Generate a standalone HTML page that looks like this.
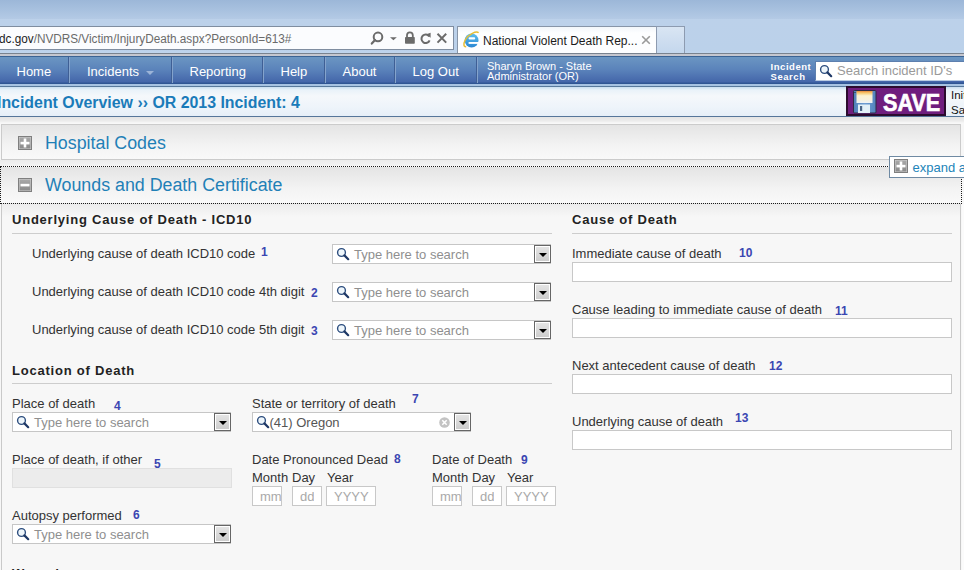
<!DOCTYPE html>
<html><head><meta charset="utf-8"><style>
*{box-sizing:border-box;margin:0;padding:0}
html,body{width:964px;height:570px;overflow:hidden;background:#f7f7f7;font-family:"Liberation Sans",sans-serif;position:relative}
.a{position:absolute}
.nw{white-space:nowrap}
#chrome{left:0;top:0;width:964px;height:56px;background:linear-gradient(#9cb7d8 0px,#a8c1df 10px,#b4cae5 19px,#bcd1ea 19px,#bbd1ea 50px,#c0d5ed 53px)}
#addr{left:-4px;top:26px;width:458px;height:24px;background:#fbfcfe;border:1px solid #7f8da0}
#url{left:-1px;top:32px;font-size:12px;color:#6a6a6a;transform:scaleX(0.98);transform-origin:0 0}
#url b{font-weight:normal;color:#1a1a1a}
#tab{left:457px;top:26px;width:200px;height:28px;background:linear-gradient(#f2f6fa,#fdfeff 6px,#fdfeff);border:1px solid #8795a8;border-bottom:none}
#newtab{left:656px;top:26px;width:29px;height:27px;background:linear-gradient(#d9e5f3,#c4d7ed);border:1px solid #8d9bb0;border-bottom:none}
#tabtitle{left:483px;top:34px;font-size:12px;color:#1b1b1b;transform-origin:0 0}
#sep1{left:0;top:53px;width:964px;height:1px;background:#79838f}
#sep2{left:0;top:54px;width:964px;height:2px;background:#c5c7cf}
#nav{left:0;top:56px;width:964px;height:28px;background:linear-gradient(#3b6394 0px,#3b6394 1px,#6b96c1 1px,#6690c0 5px,#5a82ba 14px,#4466aa 26px,#2f5594 27px,#2f5594 28px)}
#navb1{left:0;top:84px;width:964px;height:2px;background:#a6c2e2}
#navb2{left:0;top:86px;width:964px;height:1px;background:#58799c}
.ns{top:57px;width:2px;height:26px;border-left:1px solid #3f5f95;border-right:1px solid #84a3cc}
.ni{top:64px;font-size:13px;color:#fff}
#bar2{left:0;top:87px;width:964px;height:30px;background:linear-gradient(#c9def1,#e9f2f9 3px,#f5f8fb 9px,#eef4fa 20px,#e6eff8 29px)}
#bar2b{left:0;top:116px;width:964px;height:1px;background:#56769a}
#crumb{left:-3.5px;top:94px;font-size:16px;font-weight:bold;color:#1a7bb9;transform:scaleX(0.993);transform-origin:0 0}
#save{left:846px;top:86px;width:100px;height:30px;background:#6f1d7d;border:2px solid #2b0b2e;border-top-width:2px}
#savet{left:883px;top:89px;font-size:24px;font-weight:bold;color:#fff;-webkit-text-stroke:0.7px #fff;transform:scaleX(0.9);transform-origin:0 0}
#initsa{left:951px;top:88px;font-size:11.5px;line-height:15px;color:#111}
.panel{left:1px;width:960px;background:linear-gradient(#e4e4e4,#f3f3f3 60%,#f9f9f9);border:1px solid #cbcbcb}
.ptitle{font-size:18px;color:#1f80b7;transform:scaleX(0.99);transform-origin:0 0}
.lab{font-size:13px;color:#333}
.hd{font-size:13px;font-weight:bold;color:#222;letter-spacing:0.78px}
.rule{height:1px;background:#cdcdcd}
.num{font-size:12px;font-weight:bold;color:#3b46b2}
.sb{height:20px;background:#fff;border:1px solid #c6c6c6}
.ph{font-size:13px;color:#8f8f8f}
.dd{width:17px;height:18px;border:1px solid #666;box-shadow:inset 0 0 0 1px #fff;background:linear-gradient(#e6e6e6,#cccccc)}
.tri{width:0;height:0;border-left:4px solid transparent;border-right:4px solid transparent;border-top:4px solid #000}
.tb{height:20px;background:#fff;border:1px solid #c8c8c8}
.tph{font-size:13px;color:#a9a9a9;overflow:hidden}
</style></head><body>
<div id="chrome" class="a"></div>
<div id="addr" class="a"></div>
<div id="url" class="a nw"><b>dc.gov</b>/NVDRS/Victim/InjuryDeath.aspx?PersonId=613#</div>
<svg class="a" style="left:370px;top:31px" width="80" height="15" viewBox="0 0 80 15"><circle cx="8" cy="5.9" r="4.3" fill="none" stroke="#6b6b6b" stroke-width="2"/><path d="M5 9 L1.8 12.6" stroke="#6b6b6b" stroke-width="2.2" stroke-linecap="round"/><path d="M20 6.2 L26.8 6.2 L23.4 9.2 Z" fill="#6b6b6b"/><rect x="35" y="5.9" width="9.8" height="6.8" rx="0.8" fill="#6b6b6b"/><path d="M37 6.2 V4.2 A2.9 2.9 0 0 1 42.8 4.2 V6.2" fill="none" stroke="#6b6b6b" stroke-width="1.8"/><path d="M59.2 5.5 A4.2 4.2 0 1 0 59.6 9.3" fill="none" stroke="#6b6b6b" stroke-width="2"/><path d="M56.2 3.2 L60.6 1.8 L60.6 6.8 Z" fill="#6b6b6b"/><path d="M67.5 2.8 L76.2 11.6 M76.2 2.8 L67.5 11.6" stroke="#6b6b6b" stroke-width="2"/></svg>
<div id="tab" class="a"></div>
<div id="newtab" class="a"></div>
<svg class="a" style="left:461px;top:30px" width="20" height="20" viewBox="0 0 20 20"><defs><linearGradient id="ieg" x1="0" y1="0" x2="0" y2="1"><stop offset="0" stop-color="#5fc0ef"/><stop offset="1" stop-color="#2a86d2"/></linearGradient></defs><circle cx="10.6" cy="10.5" r="6.9" fill="url(#ieg)"/><rect x="7.6" y="7.2" width="6.6" height="2.4" rx="1.1" fill="#fff"/><rect x="7.6" y="12" width="11" height="1.9" fill="#fff"/><path d="M17.6 2.8 C15.5 0.8 7.5 3.8 4.2 10 C2.2 14 2.6 17.2 5.2 16.6" fill="none" stroke="#e8bd35" stroke-width="1.5"/></svg>
<div id="tabtitle" class="a nw">National Violent Death Rep...</div>
<svg class="a" style="left:641px;top:35px" width="10" height="10" viewBox="0 0 10 10"><path d="M1.2 1.2L8.8 8.8M8.8 1.2L1.2 8.8" stroke="#9a9a9a" stroke-width="1.6"/></svg>
<div id="sep1" class="a"></div><div id="sep2" class="a"></div>
<div id="nav" class="a"></div><div id="navb1" class="a"></div><div id="navb2" class="a"></div>
<div class="a ns" style="left:68px"></div>
<div class="a ns" style="left:171px"></div>
<div class="a ns" style="left:262px"></div>
<div class="a ns" style="left:324px"></div>
<div class="a ns" style="left:394px"></div>
<div class="a ns" style="left:476px"></div>
<div class="a ni nw" style="left:16.5px">Home</div>
<div class="a ni nw" style="left:87px">Incidents</div>
<div class="a ni nw" style="left:189.5px">Reporting</div>
<div class="a ni nw" style="left:280.5px">Help</div>
<div class="a ni nw" style="left:342.5px">About</div>
<div class="a ni nw" style="left:412.5px">Log Out</div>
<div class="a" style="left:145.5px;top:71px;width:0;height:0;border-left:4.8px solid transparent;border-right:4.8px solid transparent;border-top:4px solid #9cb4d8"></div>
<div class="a nw" style="left:487px;top:61px;font-size:11px;line-height:10px;color:#fff">Sharyn Brown - State<br>Administrator (OR)</div>
<div class="a nw" style="left:770.5px;top:61.5px;font-size:9.5px;line-height:10px;color:#fff;font-weight:bold;letter-spacing:0.55px">Incident<br>Search</div>
<div class="a " style="left:815px;top:61px;width:160px;height:20px;background:#fff;border:1px solid #5d7fae;border-bottom-color:#b9cbe2;border-right:none"></div>
<svg class="a" style="left:819px;top:64px" width="16" height="16" viewBox="0 0 16 16"><circle cx="5.5" cy="5.5" r="3.9" fill="#eef6fb" stroke="#2c4d7e" stroke-width="1.4"/><path d="M8.4 8.4 L12.2 12.2" stroke="#1e3866" stroke-width="2.2" stroke-linecap="round"/></svg>
<div class="a ph nw" style="left:837px;top:63.3px;color:#9a9a9a">Search incident ID's</div>
<div id="bar2" class="a"></div><div id="bar2b" class="a"></div>
<div id="crumb" class="a nw">Incident Overview &#8250;&#8250; OR 2013 Incident: 4</div>
<div id="save" class="a"></div>
<svg class="a" style="left:853px;top:90px" width="24" height="24" viewBox="0 0 24 24"><defs><linearGradient id="lbl" x1="0" y1="0" x2="0" y2="1"><stop offset="0" stop-color="#e9873a"/><stop offset="0.15" stop-color="#f6c76a"/><stop offset="0.4" stop-color="#fbf3d2"/><stop offset="0.7" stop-color="#f6f1dc"/><stop offset="1" stop-color="#eef3f8"/></linearGradient><linearGradient id="fb" x1="0" y1="0" x2="1" y2="0"><stop offset="0" stop-color="#4f7fb8"/><stop offset="0.5" stop-color="#6f9fd4"/><stop offset="1" stop-color="#5283bd"/></linearGradient></defs><rect x="0.5" y="0.5" width="22.5" height="22.5" rx="1" fill="url(#fb)" stroke="#2f2a45"/><rect x="3.5" y="1" width="16" height="12" fill="url(#lbl)"/><rect x="5" y="14.5" width="12" height="8.5" fill="#e2f0f8"/><rect x="7" y="16" width="2.2" height="5" fill="#4a6485"/><rect x="1.5" y="2" width="1" height="1" fill="#223"/></svg>
<div id="savet" class="a nw">SAVE</div>
<div id="initsa" class="a nw">Init<br>Sa</div>
<div class="a " style="left:0;top:117px;width:964px;height:8px;background:linear-gradient(#e4e4e4,#ececec 4px,#f8f8f8 6px,#f8f8f8)"></div>
<div class="a panel" style="top:124px;height:36px"></div>
<svg class="a" style="left:18px;top:136px" width="14" height="14" viewBox="0 0 14 14"><defs><linearGradient id="pg" x1="0" y1="0" x2="0" y2="1"><stop offset="0" stop-color="#a9a9a9"/><stop offset="1" stop-color="#8b8b8b"/></linearGradient></defs><rect x="0.5" y="0.5" width="13" height="13" fill="#d0d0d0" stroke="#7f7f7f"/><rect x="1.5" y="1.5" width="11" height="11" fill="url(#pg)"/><rect x="2.5" y="5.8" width="9" height="2.6" fill="#fff"/><rect x="5.7" y="2.5" width="2.6" height="9" fill="#fff"/></svg>
<div class="a ptitle nw" style="left:45px;top:133px">Hospital Codes</div>
<div class="a " style="left:0;top:160px;width:964px;height:6px;background:linear-gradient(#ebebeb,#f4f4f4)"></div>
<div class="a panel" style="top:166px;height:38px;border:1px dotted #1a1a1a;left:0;width:962px"></div>
<svg class="a" style="left:18px;top:178px" width="14" height="14" viewBox="0 0 14 14"><defs><linearGradient id="pg" x1="0" y1="0" x2="0" y2="1"><stop offset="0" stop-color="#a9a9a9"/><stop offset="1" stop-color="#8b8b8b"/></linearGradient></defs><rect x="0.5" y="0.5" width="13" height="13" fill="#d0d0d0" stroke="#7f7f7f"/><rect x="1.5" y="1.5" width="11" height="11" fill="url(#pg)"/><rect x="2.5" y="5.8" width="9" height="2.6" fill="#fff"/></svg>
<div class="a ptitle nw" style="left:45px;top:175px">Wounds and Death Certificate</div>
<div class="a " style="left:1px;top:204px;width:960px;height:366px;background:linear-gradient(#ececec,#f7f7f7 13px);border-left:1px solid #c9c9c9;border-right:1px solid #c9c9c9"></div>
<div class="a " style="left:962px;top:204px;width:2px;height:366px;background:#fbfbfb"></div>
<div class="a " style="left:889px;top:156px;width:80px;height:22px;background:#fff;border:1px solid #6f8aa3"></div>
<svg class="a" style="left:894px;top:159px" width="14" height="14" viewBox="0 0 14 14"><defs><linearGradient id="pg" x1="0" y1="0" x2="0" y2="1"><stop offset="0" stop-color="#a9a9a9"/><stop offset="1" stop-color="#8b8b8b"/></linearGradient></defs><rect x="0.5" y="0.5" width="13" height="13" fill="#d0d0d0" stroke="#7f7f7f"/><rect x="1.5" y="1.5" width="11" height="11" fill="url(#pg)"/><rect x="2.5" y="5.8" width="9" height="2.6" fill="#fff"/><rect x="5.7" y="2.5" width="2.6" height="9" fill="#fff"/></svg>
<div class="a nw" style="left:912.5px;top:160px;font-size:13px;color:#2384b9">expand all</div>
<div class="a hd nw" style="left:12px;top:212px">Underlying Cause of Death - ICD10</div>
<div class="a rule" style="left:12px;top:233px;width:540px"></div>
<div class="a hd nw" style="left:572px;top:212px">Cause of Death</div>
<div class="a rule" style="left:572px;top:233px;width:380px"></div>
<div class="a lab nw" style="left:32px;top:246px">Underlying cause of death ICD10 code</div>
<div class="a num nw" style="left:261px;top:245px">1</div>
<div class="a sb" style="left:332px;top:244px;width:219px"></div>
<svg class="a" style="left:336px;top:247px" width="16" height="16" viewBox="0 0 16 16"><circle cx="5.5" cy="5.5" r="3.9" fill="#eef6fb" stroke="#2c4d7e" stroke-width="1.4"/><path d="M8.4 8.4 L12.2 12.2" stroke="#1e3866" stroke-width="2.2" stroke-linecap="round"/></svg>
<div class="a ph nw" style="left:354px;top:246.5px">Type here to search</div>
<div class="a dd" style="left:534px;top:245px"></div>
<div class="a tri" style="left:539px;top:253px"></div>
<div class="a lab nw" style="left:32px;top:284px">Underlying cause of death ICD10 code 4th digit</div>
<div class="a num nw" style="left:311px;top:286px">2</div>
<div class="a sb" style="left:332px;top:282px;width:219px"></div>
<svg class="a" style="left:336px;top:285px" width="16" height="16" viewBox="0 0 16 16"><circle cx="5.5" cy="5.5" r="3.9" fill="#eef6fb" stroke="#2c4d7e" stroke-width="1.4"/><path d="M8.4 8.4 L12.2 12.2" stroke="#1e3866" stroke-width="2.2" stroke-linecap="round"/></svg>
<div class="a ph nw" style="left:354px;top:284.5px">Type here to search</div>
<div class="a dd" style="left:534px;top:283px"></div>
<div class="a tri" style="left:539px;top:291px"></div>
<div class="a lab nw" style="left:32px;top:322px">Underlying cause of death ICD10 code 5th digit</div>
<div class="a num nw" style="left:311px;top:324px">3</div>
<div class="a sb" style="left:332px;top:320px;width:219px"></div>
<svg class="a" style="left:336px;top:323px" width="16" height="16" viewBox="0 0 16 16"><circle cx="5.5" cy="5.5" r="3.9" fill="#eef6fb" stroke="#2c4d7e" stroke-width="1.4"/><path d="M8.4 8.4 L12.2 12.2" stroke="#1e3866" stroke-width="2.2" stroke-linecap="round"/></svg>
<div class="a ph nw" style="left:354px;top:322.5px">Type here to search</div>
<div class="a dd" style="left:534px;top:321px"></div>
<div class="a tri" style="left:539px;top:329px"></div>
<div class="a hd nw" style="left:12px;top:363px">Location of Death</div>
<div class="a rule" style="left:12px;top:383px;width:540px"></div>
<div class="a lab nw" style="left:12px;top:396px">Place of death</div>
<div class="a num nw" style="left:114px;top:399px">4</div>
<div class="a sb" style="left:12px;top:412px;width:219px"></div>
<svg class="a" style="left:16px;top:415px" width="16" height="16" viewBox="0 0 16 16"><circle cx="5.5" cy="5.5" r="3.9" fill="#eef6fb" stroke="#2c4d7e" stroke-width="1.4"/><path d="M8.4 8.4 L12.2 12.2" stroke="#1e3866" stroke-width="2.2" stroke-linecap="round"/></svg>
<div class="a ph nw" style="left:34px;top:414.5px">Type here to search</div>
<div class="a dd" style="left:214px;top:413px"></div>
<div class="a tri" style="left:219px;top:421px"></div>
<div class="a lab nw" style="left:12px;top:452px">Place of death, if other</div>
<div class="a num nw" style="left:154px;top:457px">5</div>
<div class="a " style="left:12px;top:468px;width:220px;height:20px;background:#ececec;border:1px solid #e0e0e0"></div>
<div class="a lab nw" style="left:12px;top:508px">Autopsy performed</div>
<div class="a num nw" style="left:133px;top:508px">6</div>
<div class="a sb" style="left:12px;top:524px;width:219px"></div>
<svg class="a" style="left:16px;top:527px" width="16" height="16" viewBox="0 0 16 16"><circle cx="5.5" cy="5.5" r="3.9" fill="#eef6fb" stroke="#2c4d7e" stroke-width="1.4"/><path d="M8.4 8.4 L12.2 12.2" stroke="#1e3866" stroke-width="2.2" stroke-linecap="round"/></svg>
<div class="a ph nw" style="left:34px;top:526.5px">Type here to search</div>
<div class="a dd" style="left:214px;top:525px"></div>
<div class="a tri" style="left:219px;top:533px"></div>
<div class="a hd nw" style="left:12px;top:566px">Wounds</div>
<div class="a lab nw" style="left:252px;top:396px">State or territory of death</div>
<div class="a num nw" style="left:412px;top:392px">7</div>
<div class="a sb" style="left:252px;top:412px;width:219px"></div>
<svg class="a" style="left:256px;top:415px" width="16" height="16" viewBox="0 0 16 16"><circle cx="5.5" cy="5.5" r="3.9" fill="#eef6fb" stroke="#2c4d7e" stroke-width="1.4"/><path d="M8.4 8.4 L12.2 12.2" stroke="#1e3866" stroke-width="2.2" stroke-linecap="round"/></svg>
<div class="a ph nw" style="left:269.5px;top:414.5px;color:#555">(41) Oregon</div>
<svg class="a" style="left:439px;top:417px" width="11" height="11" viewBox="0 0 11 11"><circle cx="5.5" cy="5.5" r="5.3" fill="#c3c3c3"/><path d="M3.3 3.3L7.7 7.7M7.7 3.3L3.3 7.7" stroke="#fff" stroke-width="1.5"/></svg>
<div class="a dd" style="left:454px;top:413px"></div>
<div class="a tri" style="left:459px;top:421px"></div>
<div class="a lab nw" style="left:252px;top:452px">Date Pronounced Dead</div>
<div class="a num nw" style="left:394px;top:452px">8</div>
<div class="a lab nw" style="left:252px;top:470px">Month</div>
<div class="a lab nw" style="left:292px;top:470px">Day</div>
<div class="a lab nw" style="left:327px;top:470px">Year</div>
<div class="a tb" style="left:252px;top:486px;width:30px"></div>
<div class="a tph nw" style="left:253px;top:489px;width:28px;padding-left:7px">mm</div>
<div class="a tb" style="left:292px;top:486px;width:30px"></div>
<div class="a tph nw" style="left:300px;top:489px">dd</div>
<div class="a tb" style="left:326px;top:486px;width:50px"></div>
<div class="a tph nw" style="left:334px;top:489px">YYYY</div>
<div class="a lab nw" style="left:432px;top:452px">Date of Death</div>
<div class="a num nw" style="left:521px;top:453px">9</div>
<div class="a lab nw" style="left:432px;top:470px">Month</div>
<div class="a lab nw" style="left:472px;top:470px">Day</div>
<div class="a lab nw" style="left:507px;top:470px">Year</div>
<div class="a tb" style="left:432px;top:486px;width:30px"></div>
<div class="a tph nw" style="left:433px;top:489px;width:28px;padding-left:7px">mm</div>
<div class="a tb" style="left:472px;top:486px;width:30px"></div>
<div class="a tph nw" style="left:480px;top:489px">dd</div>
<div class="a tb" style="left:506px;top:486px;width:50px"></div>
<div class="a tph nw" style="left:514px;top:489px">YYYY</div>
<div class="a lab nw" style="left:572px;top:246px">Immediate cause of death</div>
<div class="a num nw" style="left:739px;top:246px">10</div>
<div class="a tb" style="left:572px;top:262px;width:380px"></div>
<div class="a lab nw" style="left:572px;top:302px">Cause leading to immediate cause of death</div>
<div class="a num nw" style="left:835px;top:304px">11</div>
<div class="a tb" style="left:572px;top:318px;width:380px"></div>
<div class="a lab nw" style="left:572px;top:358px">Next antecedent cause of death</div>
<div class="a num nw" style="left:769px;top:359px">12</div>
<div class="a tb" style="left:572px;top:374px;width:380px"></div>
<div class="a lab nw" style="left:572px;top:414px">Underlying cause of death</div>
<div class="a num nw" style="left:735px;top:411px">13</div>
<div class="a tb" style="left:572px;top:430px;width:380px"></div>
</body></html>
